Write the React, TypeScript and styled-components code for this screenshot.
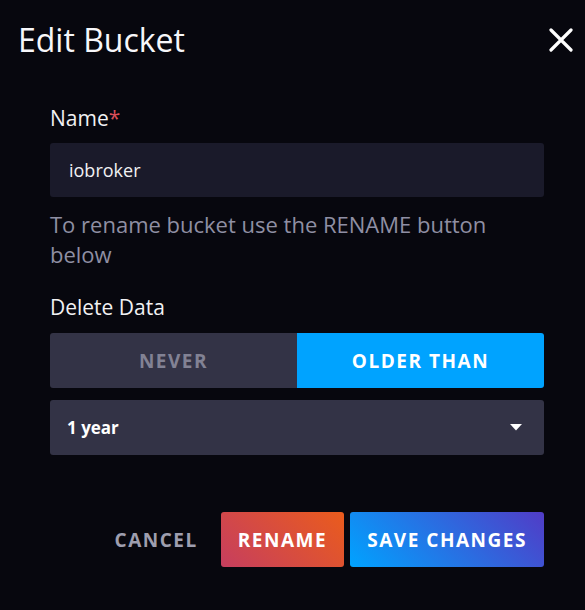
import React from "react";
import styled, { createGlobalStyle } from "styled-components";

const Global = createGlobalStyle`
  html, body { margin: 0; padding: 0; background: #07070e; }
  body { font-family: "Open Sans", "Liberation Sans", sans-serif; }
  * { box-sizing: border-box; }
`;

const Dialog = styled.div`
  width: 585px;
  min-height: 610px;
  display: flex;
  flex-direction: column;
  background: #07070e;
  color: #f1f1f3;
`;

const Header = styled.div`
  display: flex;
  align-items: center;
  justify-content: space-between;
  padding: 20px 12px 0 18px;
`;

const Title = styled.h1`
  margin: 0;
  font-size: 32px;
  font-weight: 400;
  line-height: 40px;
  color: #f7f7fa;
`;

const Close = styled.button`
  width: 24px;
  height: 24px;
  padding: 0;
  border: 0;
  background: transparent;
  cursor: pointer;
  display: flex;
`;

const Body = styled.div`
  display: flex;
  flex-direction: column;
  padding: 45px 41px 0 50px;
`;

const Label = styled.label`
  font-size: 21px;
  line-height: 26px;
  color: #f1f1f3;
  margin-bottom: 12px;
`;

const Req = styled.span`
  color: #dc4e58;
`;

const Input = styled.div`
  height: 54px;
  background: #1a1a2a;
  border-radius: 3px;
  display: flex;
  align-items: center;
  padding: 0 19px;
  font-size: 18px;
  color: #f1f1f3;
`;

const Help = styled.p`
  margin: 12px 0 0;
  font-size: 22px;
  line-height: 30px;
  color: #8f8fa3;
`;

const Section = styled.div`
  display: flex;
  flex-direction: column;
  margin-top: 25px;
`;

const Toggle = styled.div`
  display: grid;
  grid-template-columns: 1fr 1fr;
  height: 55px;
  margin-top: 1px;
  border-radius: 3px;
  overflow: hidden;
`;

const ToggleItem = styled.div<{ $active?: boolean }>`
  display: flex;
  align-items: center;
  justify-content: center;
  background: ${(p) => (p.$active ? "#00a3ff" : "#333346")};
  color: ${(p) => (p.$active ? "#ffffff" : "#828294")};
  font-size: 19px;
  font-weight: 700;
  letter-spacing: 0.08em;
`;

const Select = styled.div`
  margin-top: 12px;
  height: 55px;
  background: #333346;
  border-radius: 3px;
  display: flex;
  align-items: center;
  justify-content: space-between;
  padding: 0 22px 0 17px;
  font-size: 17px;
  font-weight: 700;
  color: #ffffff;
`;

const Footer = styled.div`
  display: flex;
  justify-content: flex-end;
  align-items: center;
  gap: 6px;
  padding: 57px 41px 0 50px;
`;

const Btn = styled.button<{ $variant: "ghost" | "danger" | "primary" }>`
  height: 55px;
  border: 0;
  border-radius: 3px;
  padding: 0 17px;
  font-family: inherit;
  font-size: 19px;
  font-weight: 700;
  letter-spacing: 0.08em;
  cursor: pointer;
  color: ${(p) => (p.$variant === "ghost" ? "#9e9eaf" : "#ffffff")};
  background: ${(p) =>
    p.$variant === "danger"
      ? "linear-gradient(45deg, #c63e5f 0%, #ea5c1c 100%)"
      : p.$variant === "primary"
      ? "linear-gradient(45deg, #00a3ff 0%, #513cc6 100%)"
      : "transparent"};
`;

export default function App() {
  return (
    <>
      <Global />
      <Dialog>
        <Header>
          <Title>Edit Bucket</Title>
          <Close aria-label="close">
            <svg width="24" height="24" viewBox="0 0 24 24">
              <path d="M2 2 L22 22 M22 2 L2 22" stroke="#ffffff" strokeWidth="3.2" strokeLinecap="round" />
            </svg>
          </Close>
        </Header>
        <Body>
          <Label>
            Name<Req>*</Req>
          </Label>
          <Input>iobroker</Input>
          <Help>To rename bucket use the RENAME button below</Help>
          <Section>
            <Label>Delete Data</Label>
            <Toggle>
              <ToggleItem>NEVER</ToggleItem>
              <ToggleItem $active>OLDER THAN</ToggleItem>
            </Toggle>
            <Select>
              <span>1 year</span>
              <svg width="12" height="7" viewBox="0 0 12 7">
                <path d="M0 0 L12 0 L6 6.5 Z" fill="#ffffff" />
              </svg>
            </Select>
          </Section>
        </Body>
        <Footer>
          <Btn $variant="ghost">CANCEL</Btn>
          <Btn $variant="danger">RENAME</Btn>
          <Btn $variant="primary">SAVE CHANGES</Btn>
        </Footer>
      </Dialog>
    </>
  );
}
